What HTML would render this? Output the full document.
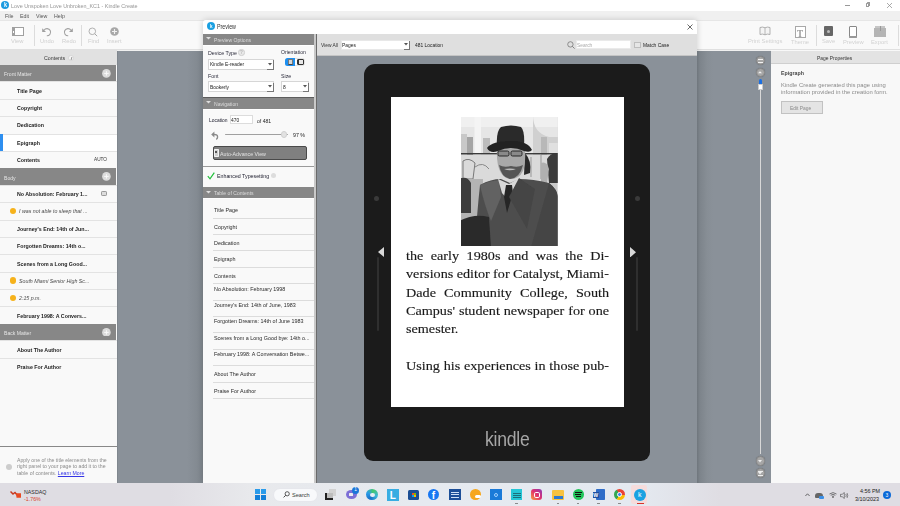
<!DOCTYPE html>
<html><head><meta charset="utf-8">
<style>
*{box-sizing:border-box;margin:0;padding:0}
html,body{width:900px;height:506px;overflow:hidden;background:#f0f0f0;font-family:"Liberation Sans",sans-serif;position:relative}
.a{position:absolute}
.t{position:absolute;white-space:nowrap;line-height:1;transform:scaleX(.91);transform-origin:0 0;margin-top:.7px}
.u{transform:none}
</style></head><body>

<!-- title bar -->
<div class="a" style="left:0;top:0;width:900px;height:11px;background:#fff"></div>
<div class="a" style="left:1px;top:1px;width:8px;height:8px;border-radius:50%;background:#1e9be0"></div>
<div class="t" style="left:3.5px;top:1.77px;font-size:6.42px;color:#fff;font-weight:bold;transform:scaleX(0.850)">k</div>
<div class="t" style="left:11px;top:2.28px;font-size:6.21px;color:#959595;transform:scaleX(0.869)">Love Unspoken Love Unbroken_KC1 - Kindle Create</div>
<div class="a" style="left:845px;top:4.5px;width:5px;height:0.6px;background:#999"></div>
<div class="a" style="left:865.5px;top:3.3px;width:3.8px;height:3.8px;border:0.6px solid #999;border-radius:0.6px"></div><div class="a" style="left:866.5px;top:2.3px;width:3.8px;height:3.8px;border-top:0.6px solid #999;border-right:0.6px solid #999;border-radius:0.6px"></div>
<svg class="a" style="left:886px;top:2px" width="7" height="7" viewBox="0 0 7 7"><path d="M1 1L6 6M6 1L1 6" stroke="#888" stroke-width="0.7"/></svg>

<!-- menu bar -->
<div class="a" style="left:0;top:11px;width:900px;height:9px;background:#f0f0f0"></div>
<div class="t" style="left:5px;top:12.28px;font-size:6.21px;color:#555;transform:scaleX(0.850)">File</div>
<div class="t" style="left:20px;top:12.28px;font-size:6.21px;color:#555;transform:scaleX(0.850)">Edit</div>
<div class="t" style="left:36px;top:12.28px;font-size:6.21px;color:#555;transform:scaleX(0.850)">View</div>
<div class="t" style="left:54px;top:12.28px;font-size:6.21px;color:#555;transform:scaleX(0.850)">Help</div>

<!-- toolbar -->
<div class="a" style="left:0;top:19.5px;width:900px;height:30.5px;background:#f9f9f9;border-top:0.7px solid #e6e6e6;border-bottom:1px solid #e0e0e0"></div>
<!-- View icon -->
<div class="a" style="left:12px;top:27.2px;width:12px;height:9px;border:1px solid #a0a0a0;background:#fff"></div>
<div class="a" style="left:12px;top:27.2px;width:3px;height:9px;background:#a0a0a0"></div>
<div class="a" style="left:13px;top:31px;width:1px;height:1.5px;background:#fff"></div>
<div class="t u" style="left:11.3px;top:37.73px;font-size:6.21px;color:#cfcfcf;margin-top:0;transform:scaleX(0.935)">View</div>
<div class="a" style="left:33.5px;top:25.3px;width:0.6px;height:20.5px;background:#dcdcdc"></div>
<svg class="a" style="left:41px;top:27px" width="11" height="10" viewBox="0 0 11 10"><path d="M3 3.2A3.6 3.6 0 1 1 5.8 8.8" fill="none" stroke="#a0a0a0" stroke-width="1.1"/><path d="M1.2 1.2L1.2 5L5 5Z" fill="#a0a0a0"/></svg>
<div class="t u" style="left:40px;top:37.73px;font-size:6.21px;color:#cfcfcf;margin-top:0;transform:scaleX(0.935)">Undo</div>
<svg class="a" style="left:63px;top:27px" width="11" height="10" viewBox="0 0 11 10"><path d="M8 3.2A3.6 3.6 0 1 0 5.2 8.8" fill="none" stroke="#a0a0a0" stroke-width="1.1"/><path d="M9.8 1.2L9.8 5L6 5Z" fill="#a0a0a0"/></svg>
<div class="t u" style="left:62px;top:37.73px;font-size:6.21px;color:#cfcfcf;margin-top:0;transform:scaleX(0.935)">Redo</div>
<div class="a" style="left:81.3px;top:25.3px;width:0.6px;height:20.5px;background:#dcdcdc"></div>
<svg class="a" style="left:88px;top:27px" width="10" height="10" viewBox="0 0 10 10"><circle cx="4.3" cy="4.3" r="3.3" fill="none" stroke="#a8a8a8" stroke-width="0.9"/><path d="M6.7 6.7L9.2 9.2" stroke="#a8a8a8" stroke-width="1"/></svg>
<div class="t u" style="left:88.3px;top:37.73px;font-size:6.21px;color:#cfcfcf;margin-top:0;transform:scaleX(0.935)">Find</div>
<svg class="a" style="left:110px;top:27.3px" width="9" height="9" viewBox="0 0 9 9"><circle cx="4.5" cy="4.5" r="4.3" fill="#a8a8a8"/><path d="M4.5 2V7M2 4.5H7" stroke="#f0f0f0" stroke-width="1.1"/></svg>
<div class="t u" style="left:107px;top:37.73px;font-size:6.21px;color:#cfcfcf;margin-top:0;transform:scaleX(0.935)">Insert</div>
<!-- right toolbar -->
<svg class="a" style="left:759px;top:26px" width="12" height="10" viewBox="0 0 12 10"><path d="M1 1.5Q3.5 0.5 6 1.8Q8.5 0.5 11 1.5V8.5Q8.5 7.5 6 8.8Q3.5 7.5 1 8.5Z" fill="#f4f4f4" stroke="#a8a8a8" stroke-width="0.9"/><path d="M6 1.8V8.8" stroke="#a8a8a8" stroke-width="0.8"/></svg>
<div class="t u" style="left:747.7px;top:37.63px;font-size:6.21px;color:#d2d2d2;margin-top:0;transform:scaleX(0.935)">Print Settings</div>
<div class="a" style="left:795px;top:26px;width:10.5px;height:12px;border:0.8px solid #a8a8a8;background:#fff"></div>
<div class="t" style="left:796.5px;top:26.91px;font-size:10.70px;color:#999;font-family:'Liberation Serif';font-weight:bold;transform:scaleX(0.850)">T</div>
<div class="t u" style="left:791.4px;top:38.53px;font-size:6.21px;color:#d2d2d2;margin-top:0;transform:scaleX(0.935)">Theme</div>
<div class="a" style="left:815.5px;top:25px;width:0.6px;height:21px;background:#dcdcdc"></div>
<div class="a" style="left:823.5px;top:26px;width:9.5px;height:10px;background:#666;border-radius:1px"></div>
<div class="a" style="left:826.8px;top:29.8px;width:3px;height:3px;border-radius:50%;background:#bbb"></div>
<div class="t u" style="left:822px;top:38.13px;font-size:6.21px;color:#d2d2d2;margin-top:0;transform:scaleX(0.935)">Save</div>
<div class="a" style="left:849px;top:26px;width:8px;height:11.5px;border:0.9px solid #888;border-radius:1px;background:#fff"></div>
<div class="a" style="left:849px;top:35.5px;width:8px;height:2px;background:#999;border-radius:0 0 1px 1px"></div>
<div class="t u" style="left:842.8px;top:38.73px;font-size:6.21px;color:#d2d2d2;margin-top:0;transform:scaleX(0.935)">Preview</div>
<div class="a" style="left:874px;top:27.5px;width:12px;height:9.5px;background:#b5b5b5"></div>
<div class="a" style="left:875px;top:26px;width:10px;height:2px;background:#c5c5c5"></div>
<div class="a" style="left:879.5px;top:26px;width:1px;height:5px;background:#999"></div>
<div class="t u" style="left:870.7px;top:38.73px;font-size:6.21px;color:#d2d2d2;margin-top:0;transform:scaleX(0.935)">Export</div>
<div class="a" style="left:898px;top:25px;width:0.6px;height:21px;background:#dcdcdc"></div>

<!-- left panel -->
<div class="a" style="left:0;top:50px;width:117px;height:433px;background:#f9f9f9"></div>
<div class="a" style="left:0;top:49.5px;width:117px;height:15.4px;background:#e1e1e1"></div>
<div class="t" style="left:44px;top:54.78px;font-size:6.21px;color:#333;transform:scaleX(0.850)">Contents</div>
<div class="a" style="left:68.3px;top:55.3px;width:5.6px;height:5.6px;border-radius:50%;background:#f4f4f4;border:0.5px solid #d6d6d6"></div><div class="a" style="left:70.9px;top:56.6px;width:0.5px;height:3px;background:#999;transform:skewX(-15deg)"></div>
<div class="a" style="left:0;top:64.90px;width:116.3px;height:16.50px;background:#878787"></div>
<div class="t" style="left:4px;top:70.70px;font-size:5.99px;color:#e6e6e6;transform:scaleX(0.850)">Front Matter</div>
<svg class="a" style="left:102.3px;top:68.75px" width="8.8" height="8.8" viewBox="0 0 9 9"><circle cx="4.5" cy="4.5" r="4.4" fill="#dcdcdc"/><path d="M4.5 2.2V6.8M2.2 4.5H6.8" stroke="#fafafa" stroke-width="1"/></svg>
<div class="a" style="left:0;top:81.40px;width:117px;height:17.38px;background:#f9f9f9;border-top:0.7px solid #e3e3e3"></div>
<div class="t" style="left:17px;top:86.90px;font-size:6.21px;color:#1a1a1a;font-weight:bold;transform:scaleX(0.850)">Title Page</div>
<div class="a" style="left:0;top:98.78px;width:117px;height:17.38px;background:#f9f9f9;border-top:0.7px solid #e3e3e3"></div>
<div class="t" style="left:17px;top:104.28px;font-size:6.21px;color:#1a1a1a;font-weight:bold;transform:scaleX(0.850)">Copyright</div>
<div class="a" style="left:0;top:116.16px;width:117px;height:17.38px;background:#f9f9f9;border-top:0.7px solid #e3e3e3"></div>
<div class="t" style="left:17px;top:121.66px;font-size:6.21px;color:#1a1a1a;font-weight:bold;transform:scaleX(0.850)">Dedication</div>
<div class="a" style="left:0;top:133.54px;width:117px;height:17.38px;background:#ffffff;border-top:0.7px solid #e3e3e3"></div>
<div class="a" style="left:0;top:133.94px;width:2.6px;height:16.98px;background:#2e8ff0"></div>
<div class="t" style="left:17px;top:139.04px;font-size:6.21px;color:#1a1a1a;font-weight:bold;transform:scaleX(0.850)">Epigraph</div>
<div class="a" style="left:0;top:150.92px;width:117px;height:17.38px;background:#f9f9f9;border-top:0.7px solid #e3e3e3"></div>
<div class="t" style="left:17px;top:156.42px;font-size:6.21px;color:#1a1a1a;font-weight:bold;transform:scaleX(0.850)">Contents</div>
<div class="t" style="left:94px;top:156.72px;font-size:5.56px;color:#333;transform:scaleX(0.850)">AUTO</div>
<div class="a" style="left:0;top:168.30px;width:116.3px;height:16.50px;background:#878787"></div>
<div class="t" style="left:4px;top:174.10px;font-size:5.99px;color:#e6e6e6;transform:scaleX(0.850)">Body</div>
<svg class="a" style="left:102.3px;top:172.15px" width="8.8" height="8.8" viewBox="0 0 9 9"><circle cx="4.5" cy="4.5" r="4.4" fill="#dcdcdc"/><path d="M4.5 2.2V6.8M2.2 4.5H6.8" stroke="#fafafa" stroke-width="1"/></svg>
<div class="a" style="left:0;top:184.80px;width:117px;height:17.38px;background:#f9f9f9;border-top:0.7px solid #e3e3e3"></div>
<div class="t" style="left:17px;top:190.30px;font-size:6.21px;color:#1a1a1a;font-weight:bold;transform:scaleX(0.850)">No Absolution: February 1...</div>
<div class="a" style="left:100.5px;top:191.10px;width:6.3px;height:5.3px;border:0.8px solid #999;border-radius:1.2px;background:#ddd"></div>
<div class="a" style="left:0;top:202.18px;width:117px;height:17.38px;background:#f9f9f9;border-top:0.7px solid #e3e3e3"></div>
<div class="t" style="left:19px;top:207.68px;font-size:6.21px;color:#4a4a4a;font-style:italic;transform:scaleX(0.850)">I was not able to sleep that ...</div>
<div class="a" style="left:9.8px;top:207.78px;width:6.3px;height:6.3px;border-radius:50%;background:#f6b21b"></div>
<div class="a" style="left:0;top:219.56px;width:117px;height:17.38px;background:#f9f9f9;border-top:0.7px solid #e3e3e3"></div>
<div class="t" style="left:17px;top:225.06px;font-size:6.21px;color:#1a1a1a;font-weight:bold;transform:scaleX(0.850)">Journey's End: 14th of Jun...</div>
<div class="a" style="left:0;top:236.94px;width:117px;height:17.38px;background:#f9f9f9;border-top:0.7px solid #e3e3e3"></div>
<div class="t" style="left:17px;top:242.44px;font-size:6.21px;color:#1a1a1a;font-weight:bold;transform:scaleX(0.850)">Forgotten Dreams: 14th o...</div>
<div class="a" style="left:0;top:254.32px;width:117px;height:17.38px;background:#f9f9f9;border-top:0.7px solid #e3e3e3"></div>
<div class="t" style="left:17px;top:259.82px;font-size:6.21px;color:#1a1a1a;font-weight:bold;transform:scaleX(0.850)">Scenes from a Long Good...</div>
<div class="a" style="left:0;top:271.70px;width:117px;height:17.38px;background:#f9f9f9;border-top:0.7px solid #e3e3e3"></div>
<div class="t" style="left:19px;top:277.20px;font-size:6.21px;color:#4a4a4a;font-style:italic;transform:scaleX(0.850)">South Miami Senior High Sc...</div>
<div class="a" style="left:9.8px;top:277.30px;width:6.3px;height:6.3px;border-radius:50%;background:#f6b21b"></div>
<div class="a" style="left:0;top:289.08px;width:117px;height:17.38px;background:#f9f9f9;border-top:0.7px solid #e3e3e3"></div>
<div class="t" style="left:19px;top:294.58px;font-size:6.21px;color:#4a4a4a;font-style:italic;transform:scaleX(0.850)">2:15 p.m.</div>
<div class="a" style="left:9.8px;top:294.68px;width:6.3px;height:6.3px;border-radius:50%;background:#f6b21b"></div>
<div class="a" style="left:0;top:306.46px;width:117px;height:17.38px;background:#f9f9f9;border-top:0.7px solid #e3e3e3"></div>
<div class="t" style="left:17px;top:311.96px;font-size:6.21px;color:#1a1a1a;font-weight:bold;transform:scaleX(0.850)">February 1998: A Convers...</div>
<div class="a" style="left:0;top:323.84px;width:116.3px;height:16.50px;background:#878787"></div>
<div class="t" style="left:4px;top:329.64px;font-size:5.99px;color:#e6e6e6;transform:scaleX(0.850)">Back Matter</div>
<svg class="a" style="left:102.3px;top:327.69px" width="8.8" height="8.8" viewBox="0 0 9 9"><circle cx="4.5" cy="4.5" r="4.4" fill="#dcdcdc"/><path d="M4.5 2.2V6.8M2.2 4.5H6.8" stroke="#fafafa" stroke-width="1"/></svg>
<div class="a" style="left:0;top:340.34px;width:117px;height:17.38px;background:#f9f9f9;border-top:0.7px solid #e3e3e3"></div>
<div class="t" style="left:17px;top:345.84px;font-size:6.21px;color:#1a1a1a;font-weight:bold;transform:scaleX(0.850)">About The Author</div>
<div class="a" style="left:0;top:357.72px;width:117px;height:17.38px;background:#f9f9f9;border-top:0.7px solid #e3e3e3"></div>
<div class="t" style="left:17px;top:363.22px;font-size:6.21px;color:#1a1a1a;font-weight:bold;transform:scaleX(0.850)">Praise For Author</div>
<div class="a" style="left:0;top:445.7px;width:117px;height:0.9px;background:#888"></div>
<div class="a" style="left:6px;top:464px;width:6.3px;height:6.3px;border-radius:50%;background:#cdcdcd"></div>
<div class="t u" style="left:17px;top:456.49px;font-size:5.78px;line-height:6.2px;color:#8a8a8a;transform:scaleX(0.897)">Apply one of the title elements from the<br>right panel to your page to add it to the<br>table of contents. <span style="color:#3434e6;text-decoration:underline;text-decoration-thickness:0.5px">Learn More</span></div>

<!-- middle gray -->
<div class="a" style="left:117px;top:50.8px;width:87px;height:432.2px;background:linear-gradient(90deg,#7b8289 0,#8a9199 1.5px,#8a9199 70px,#7f868d 100%)"></div>

<!-- dialog -->
<div class="a" style="left:203.3px;top:19.6px;width:493.7px;height:463.4px;border-radius:3px 3px 0 0;box-shadow:0 0 6px rgba(0,0,0,0.18)"></div>
<div class="a" style="left:203.3px;top:19.6px;width:493.7px;height:14.2px;background:#fff;border-radius:3px 3px 0 0"></div>
<div class="a" style="left:207px;top:21.8px;width:8px;height:8px;border-radius:50%;background:#1aa0e2"></div>
<div class="t" style="left:210px;top:23.31px;font-size:5.35px;color:#fff;font-weight:bold;transform:scaleX(0.850)">k</div>
<div class="t" style="left:217px;top:22.75px;font-size:7.06px;color:#333;transform:scaleX(0.757)">Preview</div>
<svg class="a" style="left:687px;top:23.5px" width="6" height="6" viewBox="0 0 6 6"><path d="M0.5 0.5L5.5 5.5M5.5 0.5L0.5 5.5" stroke="#444" stroke-width="0.8"/></svg>
<div class="a" style="left:203px;top:33.7px;width:111.4px;height:449.3px;background:#f9f9f9"></div>
<div class="a" style="left:314.4px;top:33.7px;width:2.6px;height:449.3px;background:#c9c9c9"></div>
<div class="a" style="left:316.4px;top:33.7px;width:0.9px;height:449.3px;background:#6a6a6a"></div>
<div class="a" style="left:203px;top:33.7px;width:111.4px;height:10.9px;background:#878787"></div>
<svg class="a" style="left:206px;top:37.300000000000004px" width="5" height="3" viewBox="0 0 5 3"><path d="M0 0H5L2.5 2.6Z" fill="#dedede"/></svg>
<div class="t" style="left:214px;top:36.08px;font-size:5.99px;color:#dcdcdc;transform:scaleX(0.850)">Preview Options</div>
<div class="a" style="left:203px;top:44.6px;width:111.4px;height:0.9px;background:#fff"></div>
<div class="t" style="left:208px;top:49.38px;font-size:6.21px;color:#2a2a3a;transform:scaleX(0.850)">Device Type</div>
<div class="a" style="left:238.2px;top:49.3px;width:6.5px;height:6.5px;border-radius:50%;background:#e9e9e9;border:0.7px solid #cfcfcf"></div>
<div class="t u" style="left:240.1px;top:50.22px;font-size:4.92px;color:#b5b5b5;font-weight:bold;transform:scaleX(0.935)">?</div>
<div class="a" style="left:208px;top:58.5px;width:65.5px;height:11px;background:#fff;border:0.7px solid #d6d6d6"></div>
<div class="a" style="left:267.0px;top:67.5px;width:6.5px;height:2px;border-right:0.9px solid #777;border-bottom:0.9px solid #777"></div>
<div class="a" style="left:272.5px;top:60.0px;width:0.9px;height:9.5px;background:#777"></div>
<svg class="a" style="left:267.5px;top:62.5px" width="4" height="3" viewBox="0 0 4 3"><path d="M0 0H4L2 2.5Z" fill="#555"/></svg>
<div class="t" style="left:209.5px;top:61.19px;font-size:5.78px;color:#222;transform:scaleX(0.850)">Kindle E-reader</div>
<div class="t" style="left:281px;top:48.78px;font-size:5.99px;color:#2a2a3a;transform:scaleX(0.850)">Orientation</div>
<div class="a" style="left:285.2px;top:57.5px;width:20.3px;height:8.3px;border-radius:2.5px;background:#fff;border:0.5px solid #e2e2e2"></div>
<div class="a" style="left:285.2px;top:57.5px;width:10.2px;height:8.3px;border-radius:2.5px 0 0 2.5px;background:#1c8ff0"></div>
<div class="a" style="left:288px;top:58.5px;width:5px;height:6.4px;background:#d6d6d6;border:0.5px solid #777;border-bottom:1px solid #444;border-radius:0.6px"></div>
<div class="a" style="left:297px;top:59px;width:7.4px;height:5.6px;background:#e8e8e8;border:0.6px solid #333;border-radius:1px"></div>
<div class="a" style="left:297.5px;top:59.5px;width:1.4px;height:4.6px;background:#333"></div>
<div class="t" style="left:208px;top:72.78px;font-size:6.21px;color:#2a2a3a;transform:scaleX(0.850)">Font</div>
<div class="a" style="left:208px;top:81.3px;width:65.5px;height:11px;background:#fff;border:0.7px solid #d6d6d6"></div>
<div class="a" style="left:267.0px;top:90.3px;width:6.5px;height:2px;border-right:0.9px solid #777;border-bottom:0.9px solid #777"></div>
<div class="a" style="left:272.5px;top:82.8px;width:0.9px;height:9.5px;background:#777"></div>
<svg class="a" style="left:267.5px;top:85.3px" width="4" height="3" viewBox="0 0 4 3"><path d="M0 0H4L2 2.5Z" fill="#555"/></svg>
<div class="t" style="left:209.5px;top:83.99px;font-size:5.78px;color:#222;transform:scaleX(0.850)">Bookerly</div>
<div class="t" style="left:281px;top:72.78px;font-size:6.21px;color:#2a2a3a;transform:scaleX(0.850)">Size</div>
<div class="a" style="left:281.3px;top:81.3px;width:27.7px;height:11px;background:#fff;border:0.7px solid #d6d6d6"></div>
<div class="a" style="left:302.5px;top:90.3px;width:6.5px;height:2px;border-right:0.9px solid #777;border-bottom:0.9px solid #777"></div>
<div class="a" style="left:308.0px;top:82.8px;width:0.9px;height:9.5px;background:#777"></div>
<svg class="a" style="left:303.0px;top:85.3px" width="4" height="3" viewBox="0 0 4 3"><path d="M0 0H4L2 2.5Z" fill="#555"/></svg>
<div class="t" style="left:282.8px;top:83.99px;font-size:5.78px;color:#222;transform:scaleX(0.850)">8</div>
<div class="a" style="left:203px;top:96.6px;width:111.4px;height:1.2px;background:#5d5d5d"></div>
<div class="a" style="left:203px;top:97.7px;width:111.4px;height:11.3px;background:#878787"></div>
<svg class="a" style="left:206px;top:101.3px" width="5" height="3" viewBox="0 0 5 3"><path d="M0 0H5L2.5 2.6Z" fill="#dedede"/></svg>
<div class="t" style="left:214px;top:100.08px;font-size:5.99px;color:#dcdcdc;transform:scaleX(0.850)">Navigation</div>
<div class="a" style="left:203px;top:109px;width:111.4px;height:0.9px;background:#fff"></div>
<div class="t" style="left:209px;top:117.09px;font-size:5.78px;color:#1a1a2a;transform:scaleX(0.850)">Location</div>
<div class="a" style="left:229.8px;top:114.8px;width:23px;height:9px;background:#fff;border:0.6px solid #dcdcdc"></div>
<div class="t" style="left:231px;top:117.09px;font-size:5.78px;color:#222;transform:scaleX(0.850)">470</div>
<div class="t" style="left:257.3px;top:117.08px;font-size:5.99px;color:#222;transform:scaleX(0.850)">of 481</div>
<svg class="a" style="left:210.5px;top:130.5px" width="8" height="9" viewBox="0 0 8 9"><path d="M2.2 3.6Q6.6 3 6.6 6Q6.6 7.6 5.2 8.3" fill="none" stroke="#8a8a8a" stroke-width="1.4"/><path d="M0.2 3.6L3.4 0.6V6.4Z" fill="#8a8a8a"/></svg>
<div class="a" style="left:224.8px;top:134.1px;width:63.5px;height:1.3px;background:#a0a0a0;border-radius:0.6px"></div>
<div class="a" style="left:281px;top:131.3px;width:6.3px;height:6.3px;border-radius:50%;background:#e2e2e2;border:0.5px solid #d0d0d0"></div>
<div class="t" style="left:292.8px;top:131.78px;font-size:6.21px;color:#222;transform:scaleX(0.850)">97 %</div>
<div class="a" style="left:213px;top:146px;width:94px;height:14px;background:#808080;border:0.9px solid #4a4a4a;border-radius:2px"></div>
<div class="a" style="left:214.2px;top:148.6px;width:5px;height:8.8px;background:#d0d0d0;border:0.8px solid #f4f4f4;border-radius:0.8px"></div>
<div class="a" style="left:215.2px;top:150.8px;width:1.8px;height:2.6px;background:#555"></div>
<div class="t" style="left:220px;top:150.68px;font-size:6.21px;color:#e2e2e2;transform:scaleX(0.850)">Auto-Advance View</div>
<div class="a" style="left:203px;top:166px;width:111.4px;height:0.8px;background:#9a9a9a"></div>
<svg class="a" style="left:206.5px;top:172px" width="8" height="8" viewBox="0 0 8 8"><path d="M0.8 4.2L3 6.8L7.3 0.6" fill="none" stroke="#1fbf3a" stroke-width="1.2"/></svg>
<div class="t" style="left:217px;top:172.78px;font-size:6.21px;color:#1a1a2a;transform:scaleX(0.850)">Enhanced Typesetting</div>
<div class="a" style="left:271px;top:173px;width:5px;height:5px;border-radius:50%;background:#ddd"></div>
<div class="a" style="left:203px;top:187px;width:111.4px;height:11px;background:#878787"></div>
<svg class="a" style="left:206px;top:190.6px" width="5" height="3" viewBox="0 0 5 3"><path d="M0 0H5L2.5 2.6Z" fill="#dedede"/></svg>
<div class="t" style="left:213.5px;top:189.38px;font-size:5.99px;color:#dcdcdc;transform:scaleX(0.850)">Table of Contents</div>
<div class="a" style="left:203px;top:198px;width:111.4px;height:0.9px;background:#fff"></div>
<div class="a" style="left:213px;top:218.0px;width:101.4px;height:0.8px;background:#dcdcdc"></div>
<div class="a" style="left:213px;top:233.79999999999998px;width:101.4px;height:0.8px;background:#dcdcdc"></div>
<div class="a" style="left:213px;top:250.2px;width:101.4px;height:0.8px;background:#dcdcdc"></div>
<div class="a" style="left:213px;top:266.8px;width:101.4px;height:0.8px;background:#dcdcdc"></div>
<div class="a" style="left:213px;top:283.0px;width:101.4px;height:0.8px;background:#dcdcdc"></div>
<div class="a" style="left:213px;top:299.6px;width:101.4px;height:0.8px;background:#dcdcdc"></div>
<div class="a" style="left:213px;top:316.0px;width:101.4px;height:0.8px;background:#dcdcdc"></div>
<div class="a" style="left:213px;top:332.1px;width:101.4px;height:0.8px;background:#dcdcdc"></div>
<div class="a" style="left:213px;top:349.0px;width:101.4px;height:0.8px;background:#dcdcdc"></div>
<div class="a" style="left:213px;top:365.1px;width:101.4px;height:0.8px;background:#dcdcdc"></div>
<div class="a" style="left:213px;top:381.70000000000005px;width:101.4px;height:0.8px;background:#dcdcdc"></div>
<div class="a" style="left:213px;top:397.90000000000003px;width:101.4px;height:0.8px;background:#dcdcdc"></div>
<div class="t u" style="left:214px;top:207.39px;font-size:5.78px;color:#2a2a2a;transform:scaleX(0.935)">Title Page</div>
<div class="t u" style="left:214px;top:223.89px;font-size:5.78px;color:#2a2a2a;transform:scaleX(0.935)">Copyright</div>
<div class="t u" style="left:214px;top:240.29px;font-size:5.78px;color:#2a2a2a;transform:scaleX(0.935)">Dedication</div>
<div class="t u" style="left:214px;top:256.79px;font-size:5.78px;color:#2a2a2a;transform:scaleX(0.935)">Epigraph</div>
<div class="t u" style="left:214px;top:272.99px;font-size:5.78px;color:#2a2a2a;transform:scaleX(0.935)">Contents</div>
<div class="t u" style="left:214px;top:285.99px;font-size:5.78px;color:#2a2a2a;transform:scaleX(0.935)">No Absolution: February 1998</div>
<div class="t u" style="left:214px;top:301.99px;font-size:5.78px;color:#2a2a2a;transform:scaleX(0.935)">Journey's End: 14th of June, 1983</div>
<div class="t u" style="left:214px;top:318.59px;font-size:5.78px;color:#2a2a2a;transform:scaleX(0.935)">Forgotten Dreams: 14th of June 1983</div>
<div class="t u" style="left:214px;top:334.99px;font-size:5.78px;color:#2a2a2a;transform:scaleX(0.935)">Scenes from a Long Good bye: 14th o...</div>
<div class="t u" style="left:214px;top:351.39px;font-size:5.78px;color:#2a2a2a;transform:scaleX(0.935)">February 1998: A Conversation Betwe...</div>
<div class="t u" style="left:214px;top:371.29px;font-size:5.78px;color:#2a2a2a;transform:scaleX(0.935)">About The Author</div>
<div class="t u" style="left:214px;top:387.89px;font-size:5.78px;color:#2a2a2a;transform:scaleX(0.935)">Praise For Author</div>

<div class="a" style="left:317.3px;top:33.7px;width:379.7px;height:22.2px;background:#dfdfdf"></div>
<div class="a" style="left:317.3px;top:55.2px;width:379.7px;height:0.9px;background:#c4c4c4"></div>
<div class="t" style="left:321px;top:42.09px;font-size:5.78px;color:#333;transform:scaleX(0.850)">View All</div>
<div class="a" style="left:340.5px;top:39.5px;width:69.5px;height:10px;background:#fff;border:0.6px solid #e8e8e8"></div>
<div class="a" style="left:403.5px;top:47.5px;width:6.5px;height:2px;border-right:0.9px solid #777;border-bottom:0.9px solid #777"></div>
<div class="a" style="left:409px;top:40.5px;width:0.9px;height:9px;background:#777"></div>
<svg class="a" style="left:404px;top:43px" width="4" height="3" viewBox="0 0 4 3"><path d="M0 0H4L2 2.5Z" fill="#555"/></svg>
<div class="t" style="left:341.5px;top:41.99px;font-size:5.78px;color:#222;transform:scaleX(0.850)">Pages</div>
<div class="t" style="left:414.5px;top:42.09px;font-size:5.78px;color:#222;transform:scaleX(0.850)">481 Location</div>
<svg class="a" style="left:566.5px;top:40.5px" width="8" height="8" viewBox="0 0 8 8"><circle cx="3.4" cy="3.4" r="2.7" fill="none" stroke="#777" stroke-width="0.8"/><path d="M5.3 5.3L7.6 7.6" stroke="#777" stroke-width="0.9"/></svg>
<div class="a" style="left:575.8px;top:40px;width:55.2px;height:9px;background:#fff;border:0.5px solid #eaeaea"></div>
<div class="t" style="left:576.5px;top:42.30px;font-size:5.67px;color:#a9a9a9;transform:scaleX(0.850)">Search</div>
<div class="a" style="left:634px;top:41.5px;width:6.5px;height:6.2px;background:#e6e6e6;border:0.6px solid #bdbdbd"></div>
<div class="t" style="left:643px;top:42.09px;font-size:5.78px;color:#222;transform:scaleX(0.850)">Match Case</div>
<div class="a" style="left:317.3px;top:56px;width:379.7px;height:427px;background:#8a9199"></div>
<div class="a" style="left:364px;top:63.7px;width:286px;height:397px;background:#1b1b1b;border-radius:11px 11px 9px 9px"></div>
<div class="a" style="left:390.7px;top:97px;width:233.3px;height:310.2px;background:#fff"></div>
<div class="a" style="left:374.3px;top:196px;width:5px;height:5px;border-radius:50%;background:#3a3a3a"></div>
<div class="a" style="left:635.3px;top:196px;width:5px;height:5px;border-radius:50%;background:#3a3a3a"></div>
<svg class="a" style="left:377.8px;top:247px" width="6" height="10" viewBox="0 0 6 10"><path d="M6 0V10L0 5Z" fill="#d9d9d9"/></svg>
<svg class="a" style="left:630px;top:246.5px" width="6" height="10.5" viewBox="0 0 6 10.5"><path d="M0 0V10.5L6 5.25Z" fill="#d9d9d9"/></svg>
<div class="a" style="left:376.5px;top:257.3px;width:2px;height:73.5px;border-radius:1px;background:#2f2f2f"></div>
<div class="a" style="left:636px;top:257.3px;width:2px;height:73.5px;border-radius:1px;background:#2f2f2f"></div>
<div class="t" style="left:485px;top:428px;font-size:20px;color:#a6a6a6;transform:scaleX(0.88);transform-origin:0 0;letter-spacing:-0.3px">kindle</div>
<svg class="a" style="left:461px;top:117px" width="96.8" height="129" viewBox="0 0 96.8 129">
<defs><filter id="bl" x="-5%" y="-5%" width="110%" height="110%"><feGaussianBlur stdDeviation="0.7"/></filter><clipPath id="pc"><rect width="96.8" height="129"/></clipPath></defs>
<g clip-path="url(#pc)">
<rect width="96.8" height="129" fill="#c9c9c9"/>
<g filter="url(#bl)">
<rect x="-2" y="-2" width="101" height="40" fill="#e6e6e6"/>
<rect x="-2" y="-2" width="101" height="12" fill="#f0f0f0"/>
<path d="M72 -2Q72 16 88 20L99 20V40H72Z" fill="#d0d0d0"/>
<rect x="13.5" y="-2" width="6.5" height="42" fill="#f4f4f4"/>
<rect x="-2" y="17" width="8" height="22" fill="#c8c8c8"/>
<rect x="6" y="20" width="6" height="18" fill="#a5a5a5"/>
<rect x="22" y="21" width="7" height="16" fill="#bcbcbc"/>
<rect x="80" y="20" width="6" height="18" fill="#b8b8b8"/>
<rect x="88" y="26" width="9" height="12" fill="#e0e0e0"/>
<rect x="-2" y="36" width="101" height="1.4" fill="#3a3a3a"/>
<rect x="-2" y="38" width="101" height="28" fill="#dadada"/>
<path d="M2 44Q8 40 14 46L12 62H2Z" fill="none" stroke="#777" stroke-width="1"/>
<path d="M14 50Q22 44 28 52" fill="none" stroke="#888" stroke-width="1"/>
<path d="M70 40V60M80 38V62" stroke="#888" stroke-width="0.8"/>
<rect x="-2" y="62" width="24" height="45" fill="#b4b4b4"/>
<path d="M-2 62Q6 58 10 66L10 96H-2Z" fill="#3c3c3c"/>
<path d="M86 42Q90 35 97 36V66H88Z" fill="#3a3a3a"/>
<path d="M80 46Q86 44 88 52L86 66H80Z" fill="#b0b0b0"/>
<path d="M19 68Q30 62 40 62L49 66L58 62Q72 62 88 66Q96 72 97 80V130H14Q16 95 19 68Z" fill="#4e4e4e"/>
<path d="M19 68Q28 64 38 63L40 80L30 104Q24 90 19 68Z" fill="#626262"/>
<path d="M88 66Q96 72 97 80V130H70Z" fill="#454545"/>
<path d="M-2 104Q14 96 28 100L30 130H-2Z" fill="#2c2c2c"/>
<path d="M37 62L48 67L58 61L55 74L48 84L41 76Z" fill="#d8d8d8"/>
<path d="M45 68L51 68L52 76L46 96L43 80Z" fill="#262626"/>
<path d="M58 61L48 80L66 112L74 72Z" fill="#444"/>
<path d="M64 36Q71 44 69 56L63 58Z" fill="#2a2a2a"/>
<path d="M36 30Q35 48 40 56Q44 62 50 62Q58 62 62 54Q65 46 64 30Z" fill="#a8a8a8"/>
<path d="M38 48Q40 60 49 62Q59 61 62 48Q57 51 50 49Q43 51 38 48Z" fill="#555"/>
<path d="M43 52Q49 54.5 55 52Q49 51 43 52Z" fill="#bbb"/>
<rect x="37" y="34" width="11" height="5" rx="1.5" fill="#8a8a8a" stroke="#1e1e1e" stroke-width="0.9"/>
<rect x="50" y="34" width="11" height="5" rx="1.5" fill="#8a8a8a" stroke="#1e1e1e" stroke-width="0.9"/>
<path d="M36 29Q35 14 40 10Q50 7 60 10Q64 14 63 29Z" fill="#2b2b2b"/>
<path d="M26 31Q31 24 50 24Q67 24 71 33Q69 36 63 34Q50 28 37 34Q29 37 26 31Z" fill="#222"/>
</g></g></svg>
<div class="a" style="left:406.3px;top:247.1px;width:190.4px;font-family:'Liberation Serif',serif;font-size:13.3px;line-height:18.27px;color:#1a1a1a;-webkit-text-stroke:0.15px #1a1a1a;white-space:nowrap;transform:scaleX(1.0665);transform-origin:0 0">
<div style="display:flex;justify-content:space-between"><span>the</span><span>early</span><span>1980s</span><span>and</span><span>was</span><span>the</span><span>Di-</span></div>
<div style="display:flex;justify-content:space-between"><span>versions</span><span>editor</span><span>for</span><span>Catalyst,</span><span>Miami-</span></div>
<div style="display:flex;justify-content:space-between"><span>Dade</span><span>Community</span><span>College,</span><span>South</span></div>
<div style="display:flex;justify-content:space-between"><span>Campus'</span><span>student</span><span>newspaper</span><span>for</span><span>one</span></div>
<div>semester.</div><div>&nbsp;</div>
<div style="display:flex;justify-content:space-between"><span>Using</span><span>his</span><span>experiences</span><span>in</span><span>those</span><span>pub-</span></div>
</div>
<div class="a" style="left:697px;top:50.6px;width:74px;height:432.4px;background:linear-gradient(90deg,#6f767d 0,#7d848b 3px,#878e95 10px,#8a9199 16px,#8a9199 100%)"></div>
<div class="a" style="left:755.6px;top:55.6px;width:9.6px;height:9.6px;border-radius:50%;background:#a6a6a6;border:0.6px solid #8c8c8c;box-shadow:0 0 1px rgba(0,0,0,.3)"></div>
<div class="a" style="left:758px;top:58.8px;width:4.8px;height:0.8px;background:#f2f2f2"></div>
<div class="a" style="left:758px;top:61.8px;width:4.8px;height:0.8px;background:#f2f2f2"></div>
<div class="a" style="left:755.6px;top:67.6px;width:9.6px;height:9.6px;border-radius:50%;background:#a6a6a6;border:0.6px solid #8c8c8c;box-shadow:0 0 1px rgba(0,0,0,.3)"></div>
<svg class="a" style="left:758.4px;top:71.2px" width="4" height="2.5" viewBox="0 0 4 2.5"><path d="M0 2.2H4L2 0.2Z" fill="#f2f2f2"/></svg>
<div class="a" style="left:759.9px;top:89px;width:1.6px;height:365px;background:#d8d8d8"></div>
<div class="a" style="left:758.6px;top:79.4px;width:3.4px;height:5px;border-radius:1.5px 1.5px 0 0;background:#1b6fe3"></div>
<div class="a" style="left:757.7px;top:84.3px;width:5.3px;height:5.7px;background:#fff;border:0.4px solid #ccc"></div>
<div class="a" style="left:755.6px;top:456.3px;width:9.6px;height:9.6px;border-radius:50%;background:#a6a6a6;border:0.6px solid #8c8c8c;box-shadow:0 0 1px rgba(0,0,0,.3)"></div>
<svg class="a" style="left:758.3px;top:460.0px" width="4" height="3" viewBox="0 0 4 3"><path d="M0 0H4L2 2.5Z" fill="#eee"/></svg>
<div class="a" style="left:755.6px;top:468.3px;width:9.6px;height:9.6px;border-radius:50%;background:#a6a6a6;border:0.6px solid #8c8c8c;box-shadow:0 0 1px rgba(0,0,0,.3)"></div>
<div class="a" style="left:757.8px;top:471.0px;width:5px;height:0.9px;background:#eee"></div>
<svg class="a" style="left:758.3px;top:472.0px" width="4" height="3" viewBox="0 0 4 3"><path d="M0 0H4L2 2.5Z" fill="#eee"/></svg>
<div class="a" style="left:757.8px;top:474.8px;width:5px;height:0.9px;background:#eee"></div>
<div class="a" style="left:771px;top:49.5px;width:129px;height:433.5px;background:#f8f8f8"></div>
<div class="a" style="left:771px;top:50.9px;width:129px;height:13.3px;background:#e3e3e3;border-bottom:0.8px solid #cfcfcf"></div>
<div class="t" style="left:817px;top:55.09px;font-size:5.78px;color:#333;transform:scaleX(0.850)">Page Properties</div>
<div class="t" style="left:781px;top:69.78px;font-size:6.21px;color:#444;font-weight:bold;transform:scaleX(0.850)">Epigraph</div>
<div class="t u" style="left:781px;top:81.5px;font-size:5.99px;line-height:6.6px;color:#8a8a8a;transform:scaleX(0.981)">Kindle Create generated this page using<br>information provided in the creation form.</div>
<div class="a" style="left:780.5px;top:101px;width:42px;height:13px;background:#e4e4e4;border:0.8px solid #c2c2c2"></div>
<div class="t" style="left:790px;top:105.6px;font-size:5.78px;color:#8a8a8a;transform:scaleX(0.850)">Edit Page</div>

<!-- taskbar -->
<div class="a" style="left:0;top:483px;width:900px;height:23px;background:linear-gradient(90deg,#dfdde3 0,#dfdde3 170px,#e8e9ec 250px,#e6eaf0 420px,#e4e9f0 640px,#dfdde3 720px,#dfdde3 100%)"></div>
<svg class="a" style="left:9.5px;top:490px" width="12" height="8" viewBox="0 0 12 8"><path d="M0.5 1.5L3 4L5 2.5L8 6" fill="none" stroke="#c9391f" stroke-width="1.5"/><path d="M6 3.3L11 3.3V7.8L6.5 7.8Z" fill="#e84a22"/></svg>
<div class="t u" style="left:24px;top:489px;font-size:5.3px;color:#2a2a2a">NASDAQ</div>
<div class="t u" style="left:24px;top:496.5px;font-size:5.3px;color:#d8432a">-1.76%</div>
<div class="a" style="left:255px;top:489px;width:5.3px;height:5.3px;background:#2a9bea"></div>
<div class="a" style="left:260.8px;top:489px;width:5.3px;height:5.3px;background:#2a9bea"></div>
<div class="a" style="left:255px;top:494.8px;width:5.3px;height:5.3px;background:#137fd8"></div>
<div class="a" style="left:260.8px;top:494.8px;width:5.3px;height:5.3px;background:#137fd8"></div>
<div class="a" style="left:272.8px;top:488px;width:45.5px;height:13.8px;border-radius:7px;background:#f8f9fb;border:0.5px solid #e6e7ec"></div>
<svg class="a" style="left:283px;top:491.3px" width="7" height="7" viewBox="0 0 7 7"><circle cx="4.2" cy="2.8" r="2.1" fill="none" stroke="#333" stroke-width="0.8"/><path d="M2.7 4.3L0.6 6.4" stroke="#333" stroke-width="0.9"/></svg>
<div class="t u" style="left:292px;top:492.3px;font-size:5.6px;color:#3a3a3a">Search</div>
<div class="a" style="left:328.5px;top:489.3px;width:7.5px;height:7px;background:#d2d2d2"></div>
<div class="a" style="left:325px;top:493px;width:8px;height:7px;background:#222"></div>
<div class="a" style="left:327px;top:493px;width:6px;height:5px;background:#bdbdbd"></div>
<div class="a" style="left:345.6px;top:489.5px;width:11px;height:9.5px;border-radius:50%;background:#7d6fd6"></div>
<div class="a" style="left:348.5px;top:492.5px;width:4.5px;height:3.3px;background:#eee;border-radius:0.5px"></div>
<div class="a" style="left:352px;top:486.5px;width:7px;height:7px;border-radius:50%;background:#1a76d8"></div>
<div class="t u" style="left:354.3px;top:487.6px;font-size:4.8px;color:#fff">1</div>
<div class="a" style="left:366px;top:489px;width:11.8px;height:11px;border-radius:50%;background:conic-gradient(from 200deg,#1a6fc7,#2b9de8,#45c86a,#3db5d9,#1a6fc7)"></div>
<div class="a" style="left:370px;top:493px;width:4.5px;height:4px;border-radius:50%;background:#e9eef4"></div>
<div class="a" style="left:386.7px;top:488.5px;width:12.2px;height:12px;background:#38ade2"></div>
<div class="t u" style="left:389.8px;top:490px;font-size:10px;color:#fff;font-weight:bold">L</div>
<div class="a" style="left:407.8px;top:490px;width:11px;height:10px;border-radius:1.5px;background:#1b4e94"></div>
<div class="a" style="left:411.5px;top:493px;width:2px;height:2px;background:#f25022"></div><div class="a" style="left:413.7px;top:493px;width:2px;height:2px;background:#7fba00"></div><div class="a" style="left:411.5px;top:495.2px;width:2px;height:2px;background:#00a4ef"></div><div class="a" style="left:413.7px;top:495.2px;width:2px;height:2px;background:#ffb900"></div>
<div class="a" style="left:428.3px;top:489px;width:11px;height:11px;border-radius:50%;background:#1877f2"></div>
<div class="t u" style="left:431.8px;top:490.5px;font-size:10px;color:#fff;font-weight:bold">f</div>
<div class="a" style="left:448.9px;top:489px;width:11.7px;height:11px;background:#1d4f98"></div>
<div class="a" style="left:451px;top:492px;width:7.5px;height:0.8px;background:#cfe0f5"></div><div class="a" style="left:451px;top:494.3px;width:7.5px;height:0.8px;background:#cfe0f5"></div><div class="a" style="left:451px;top:496.6px;width:7.5px;height:0.8px;background:#cfe0f5"></div>
<div class="a" style="left:470px;top:489px;width:10.6px;height:10.6px;border-radius:50%;background:#f6a71e"></div>
<div class="a" style="left:474.5px;top:494.5px;width:6.5px;height:3.3px;border-radius:2px;background:#fff"></div>
<div class="a" style="left:490px;top:489px;width:11.7px;height:11px;background:#1a7ad8"></div>
<div class="a" style="left:494px;top:492.5px;width:4px;height:4px;border-radius:50%;border:0.6px solid #9fd0ff"></div>
<div class="a" style="left:511.1px;top:489px;width:11.1px;height:11px;background:#25c6d6"></div>
<div class="a" style="left:513px;top:492.5px;width:7.5px;height:0.8px;background:#1a6f7a"></div><div class="a" style="left:513px;top:494.5px;width:7.5px;height:0.8px;background:#1a6f7a"></div><div class="a" style="left:513px;top:496.5px;width:7.5px;height:0.8px;background:#1a6f7a"></div>
<div class="a" style="left:531.2px;top:489px;width:11px;height:11px;border-radius:3px;background:linear-gradient(45deg,#f9a43c,#e1306c 50%,#8a3ab9)"></div>
<div class="a" style="left:533.7px;top:491.5px;width:6px;height:6px;border-radius:1.8px;border:0.8px solid #fff"></div>
<div class="a" style="left:552px;top:489.5px;width:12px;height:10px;background:#f7c240;border-radius:1px"></div>
<div class="a" style="left:553.5px;top:495.5px;width:9px;height:3px;background:#2e7ad1"></div>
<div class="a" style="left:572.7px;top:489px;width:11.3px;height:11px;border-radius:50%;background:#22c55a"></div>
<div class="a" style="left:575px;top:492.3px;width:6.5px;height:0.9px;background:#111"></div><div class="a" style="left:575.3px;top:494.3px;width:6px;height:0.9px;background:#111"></div><div class="a" style="left:575.6px;top:496.3px;width:5px;height:0.9px;background:#111"></div>
<div class="a" style="left:596px;top:489.3px;width:9.3px;height:10.7px;background:#2f6dc8;border-radius:0.8px"></div>
<div class="a" style="left:592.7px;top:491.8px;width:6.5px;height:6.5px;background:#1e4fa0"></div>
<div class="t u" style="left:593.3px;top:492.5px;font-size:5.2px;color:#fff;font-weight:bold">W</div>
<div class="a" style="left:614px;top:489px;width:11.3px;height:11.3px;border-radius:50%;background:conic-gradient(from -30deg,#ea4335 0 120deg,#fbbc05 120deg 240deg,#34a853 240deg 360deg)"></div>
<div class="a" style="left:617.2px;top:492.2px;width:5px;height:5px;border-radius:50%;background:#4285f4;border:0.9px solid #fff"></div>
<div class="a" style="left:630.7px;top:485.3px;width:16.6px;height:18.7px;border-radius:2px;background:#f5dcdc"></div>
<div class="a" style="left:634px;top:488.6px;width:12px;height:12px;border-radius:50%;background:#1ba2e2"></div>
<div class="t u" style="left:638px;top:490.6px;font-size:7px;color:#fff">k</div>
<div class="a" style="left:637px;top:502.6px;width:6.5px;height:1.1px;background:#d8332a"></div>
<div class="a" style="left:515.4000000000001px;top:502.8px;width:2.6px;height:0.9px;background:#8a8a8a"></div>
<div class="a" style="left:556.5px;top:502.8px;width:2.6px;height:0.9px;background:#8a8a8a"></div>
<div class="a" style="left:576.7px;top:502.8px;width:2.6px;height:0.9px;background:#8a8a8a"></div>
<div class="a" style="left:597.2px;top:502.8px;width:2.6px;height:0.9px;background:#8a8a8a"></div>
<div class="a" style="left:618.0px;top:502.8px;width:2.6px;height:0.9px;background:#8a8a8a"></div>
<svg class="a" style="left:804.5px;top:493px" width="5" height="3.5" viewBox="0 0 5 3.5"><path d="M0.4 3L2.5 0.8L4.6 3" fill="none" stroke="#333" stroke-width="0.7"/></svg>
<div class="a" style="left:815px;top:492.5px;width:8px;height:5.5px;border-radius:3px 3px 1px 1px;background:#666"></div>
<div class="a" style="left:819px;top:495.5px;width:4.5px;height:3px;background:#3a8ee6;border-radius:1px"></div>
<svg class="a" style="left:828.5px;top:492px" width="8" height="6" viewBox="0 0 8 6"><path d="M0.5 2Q4 -0.8 7.5 2M1.7 3.3Q4 1.5 6.3 3.3M3 4.5Q4 3.7 5 4.5" fill="none" stroke="#444" stroke-width="0.7"/><circle cx="4" cy="5.4" r="0.6" fill="#444"/></svg>
<svg class="a" style="left:840px;top:491.5px" width="9" height="7" viewBox="0 0 9 7"><path d="M0.5 2.3H2.2L4.3 0.5V6.5L2.2 4.7H0.5Z" fill="none" stroke="#444" stroke-width="0.6"/><path d="M5.8 2Q6.7 3.5 5.8 5M7 1Q8.5 3.5 7 6" fill="none" stroke="#444" stroke-width="0.6"/></svg>
<div class="t u" style="left:860px;top:488.7px;font-size:5.4px;color:#1a1a1a">4:56 PM</div>
<div class="t u" style="left:855px;top:496.3px;font-size:5.4px;color:#1a1a1a">3/10/2023</div>
<div class="a" style="left:883px;top:491px;width:8px;height:8px;border-radius:50%;background:#0b6ad8"></div>
<div class="t u" style="left:885.6px;top:492.4px;font-size:5px;color:#fff">3</div>

</body></html>
